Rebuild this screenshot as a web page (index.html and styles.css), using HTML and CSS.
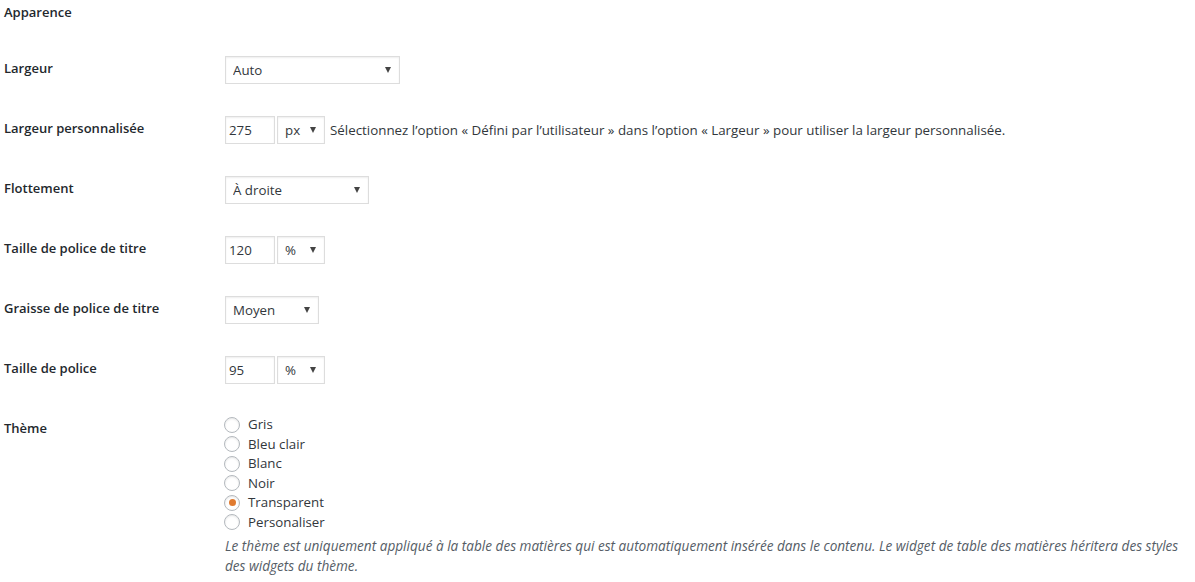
FILE: index.html
```html
<!DOCTYPE html>
<html lang="fr">
  <head>
    <meta charset="UTF-8" />
    <title>Apparence</title>
    <link rel="stylesheet" href="styles.css">
  </head>
  <body>
    <h3 class="section-title">Apparence</h3>

    <div class="form-table">
      <div class="row">
        <div class="label">Largeur</div>
        <div class="field">
          <span class="select w-large"><select><option>Auto</option></select></span>
        </div>
      </div>

      <div class="row">
        <div class="label">Largeur personnalisée</div>
        <div class="field">
          <input class="num" type="text" value="275">
          <span class="select w-unit"><select><option>px</option></select></span>
          <span class="hint">Sélectionnez l’option « Défini par l’utilisateur » dans l’option « Largeur » pour utiliser la largeur personnalisée.</span>
        </div>
      </div>

      <div class="row">
        <div class="label">Flottement</div>
        <div class="field">
          <span class="select w-mid"><select><option>À droite</option></select></span>
        </div>
      </div>

      <div class="row">
        <div class="label">Taille de police de titre</div>
        <div class="field">
          <input class="num" type="text" value="120">
          <span class="select w-unit"><select><option>%</option></select></span>
        </div>
      </div>

      <div class="row">
        <div class="label">Graisse de police de titre</div>
        <div class="field">
          <span class="select w-small"><select><option>Moyen</option></select></span>
        </div>
      </div>

      <div class="row">
        <div class="label">Taille de police</div>
        <div class="field">
          <input class="num" type="text" value="95">
          <span class="select w-unit"><select><option>%</option></select></span>
        </div>
      </div>

      <div class="row">
        <div class="label">Thème</div>
        <div class="field">
          <fieldset class="radios">
            <label><input type="radio" name="theme"> Gris</label>
            <label><input type="radio" name="theme"> Bleu clair</label>
            <label><input type="radio" name="theme"> Blanc</label>
            <label><input type="radio" name="theme"> Noir</label>
            <label><input type="radio" name="theme" checked> Transparent</label>
            <label><input type="radio" name="theme"> Personaliser</label>
          </fieldset>
          <p class="description">Le thème est uniquement appliqué à la table des matières qui est automatiquement insérée dans le contenu. Le widget de table des matières héritera des styles des widgets du thème.</p>
        </div>
      </div>
    </div>
  </body>
</html>
```

FILE: styles.css
```css
body {
  margin: 0;
  padding: 0 4px;
  background: #fff;
  color: #32373c;
  font-family: "Open Sans", "Noto Sans", sans-serif;
  font-size: 13px;
  line-height: 1.4;
}

.section-title {
  margin: 0;
  padding-top: 3px;
  height: 37px;
  font-size: 13px;
  font-weight: 600;
  color: #23282d;
}

.row {
  display: grid;
  grid-template-columns: 210px 1fr;
}

.label {
  padding: 20px 10px 20px 0;
  font-size: 13px;
  font-weight: 600;
  line-height: 1.3;
  color: #23282d;
}

.field {
  padding: 15px 10px 15px 11px;
  display: flex;
  flex-wrap: wrap;
  align-items: center;
  gap: 0 2px;
  align-content: flex-start;
}

.num,
.select select {
  height: 28px;
  margin: 1px 0;
  box-sizing: border-box;
  border: 1px solid #ddd;
  box-shadow: inset 0 1px 2px rgba(0, 0, 0, 0.07);
  background: #fff;
  color: #32373c;
  font: inherit;
  font-size: 13.3px;
  border-radius: 0;
  outline: none;
}

.num {
  width: 50px;
  padding: 3px 5px 3px 3px;
}

.select {
  position: relative;
  display: inline-block;
}

.select select {
  appearance: none;
  -webkit-appearance: none;
  width: 100%;
  padding: 2px 22px 2px 7px;
  display: block;
}

.select::after {
  content: "";
  position: absolute;
  right: 9px;
  top: 12px;
  border-left: 3.5px solid transparent;
  border-right: 3.5px solid transparent;
  border-top: 6px solid #444;
  pointer-events: none;
}

.w-large { width: 175px; }
.w-mid { width: 144px; }
.w-small { width: 94px; }
.w-unit { width: 48px; }

.hint {
  margin-left: 3px;
  font-size: 13.35px;
}

.radios {
  border: 0;
  margin: 0;
  padding: 0;
  width: 100%;
  font-size: 13.3px;
}

.radios label {
  display: flex;
  align-items: center;
  height: 19.5px;
  gap: 8px;
}

.radios input {
  appearance: none;
  -webkit-appearance: none;
  width: 16px;
  height: 16px;
  margin: 0 0 0 -1px;
  border: 1px solid #b4b9be;
  border-radius: 50%;
  background: #fff;
  box-shadow: inset 0 1px 2px rgba(0, 0, 0, 0.1);
  display: grid;
  place-items: center;
}

.radios input:checked::before {
  content: "";
  width: 7px;
  height: 7px;
  border-radius: 50%;
  background: #e07b30;
}

.description {
  margin: 4px 0 0;
  font-style: italic;
  font-size: 13.6px;
  color: #555d66;
  line-height: 20px;
}
```
